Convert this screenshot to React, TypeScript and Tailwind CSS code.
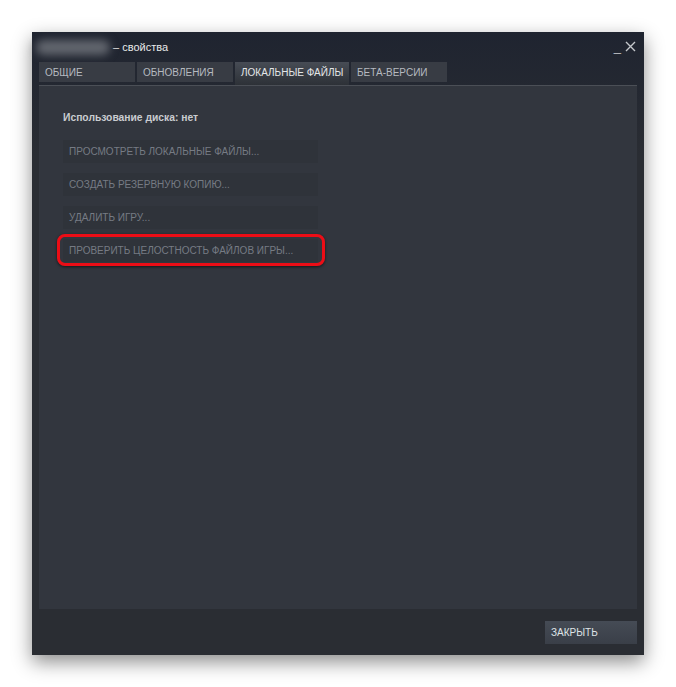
import React from "react";

const font = { fontFamily: '"Liberation Sans", Arial, sans-serif' };

function Tab({ label, active, w }: { label: string; active?: boolean; w: string }) {
  return (
    <div
      className={
        "flex items-center pl-[6px] text-[10px] whitespace-nowrap " +
        w +
        (active
          ? " h-[23px] pb-[3px] bg-gradient-to-b from-[#474c55] to-[#2d3137] text-[#e4e6e8]"
          : " h-[20px] bg-[#383c44] text-[#b6bac0]")
      }
    >
      {label}
    </div>
  );
}

function Btn({ label, highlight }: { label: string; highlight?: boolean }) {
  return (
    <div className="relative w-[255px] h-[23px]">
      <div className="w-full h-full bg-[#2f333a] flex items-center pl-[6px] text-[10px] text-[#767b84] whitespace-nowrap">
        {label}
      </div>
      {highlight && (
        <div className="absolute top-[-5px] bottom-[-4px] left-[-6px] right-[-7px] border-[3px] border-[#ec0d16] rounded-[8px] shadow-[0_1px_3px_rgba(0,0,0,0.6)]" />
      )}
    </div>
  );
}

export default function App() {
  return (
    <div className="w-[676px] h-[687px] bg-white pl-[32px] pt-[32px]" style={font}>
      <div className="w-[612px] h-[623px] flex flex-col bg-gradient-to-b from-[#1f2430] via-[#2a2d33] via-[20%] to-[#2a2d33] shadow-[0_7px_18px_rgba(0,0,0,0.45)]">
        {/* title */}
        <div className="h-[30px] flex items-center pl-[4px] pr-[8px]">
          <div className="w-[74px] h-[15px] rounded-full bg-[#62666e] blur-[4px]" />
          <span className="ml-[3px] text-[11px] text-[#e8e9ea]">– свойства</span>
          <div className="ml-auto flex items-end gap-[4px] text-[#c4c7cb]">
            <span className="text-[13px] leading-[14px]">_</span>
            <svg width="11" height="11" viewBox="0 0 11 11" className="mb-[2px]">
              <path d="M1 1 L10 10 M10 1 L1 10" stroke="#c4c7cb" strokeWidth="1.4" />
            </svg>
          </div>
        </div>
        {/* tabs */}
        <div className="px-[7px]">
          <div className="relative h-[23px] flex items-start gap-[2px]">
            <Tab label="ОБЩИЕ" w="w-[96px]" />
            <Tab label="ОБНОВЛЕНИЯ" w="w-[96px]" />
            <Tab label="ЛОКАЛЬНЫЕ ФАЙЛЫ" w="w-[114px]" active />
            <Tab label="БЕТА-ВЕРСИИ" w="w-[96px]" />
          </div>
        </div>
        {/* panel */}
        <div className="mx-[7px] h-[524px] bg-[#32363e] border-t border-[#4b4f56] pt-[25px] pl-[24px]">
          <div className="text-[10.3px] leading-[14px] text-[#c9ccd0] font-bold">Использование диска: нет</div>
          <div className="mt-[15px] flex flex-col gap-[10px]">
            <Btn label="ПРОСМОТРЕТЬ ЛОКАЛЬНЫЕ ФАЙЛЫ..." />
            <Btn label="СОЗДАТЬ РЕЗЕРВНУЮ КОПИЮ..." />
            <Btn label="УДАЛИТЬ ИГРУ..." />
            <Btn label="ПРОВЕРИТЬ ЦЕЛОСТНОСТЬ ФАЙЛОВ ИГРЫ..." highlight />
          </div>
        </div>
        {/* footer */}
        <div className="flex justify-end pr-[7px] pt-[12px]">
          <div className="w-[92px] h-[23px] bg-gradient-to-b from-[#454b55] to-[#3a3f48] flex items-center pl-[6px] text-[10px] text-[#dfe3e7]">
            ЗАКРЫТЬ
          </div>
        </div>
      </div>
    </div>
  );
}
